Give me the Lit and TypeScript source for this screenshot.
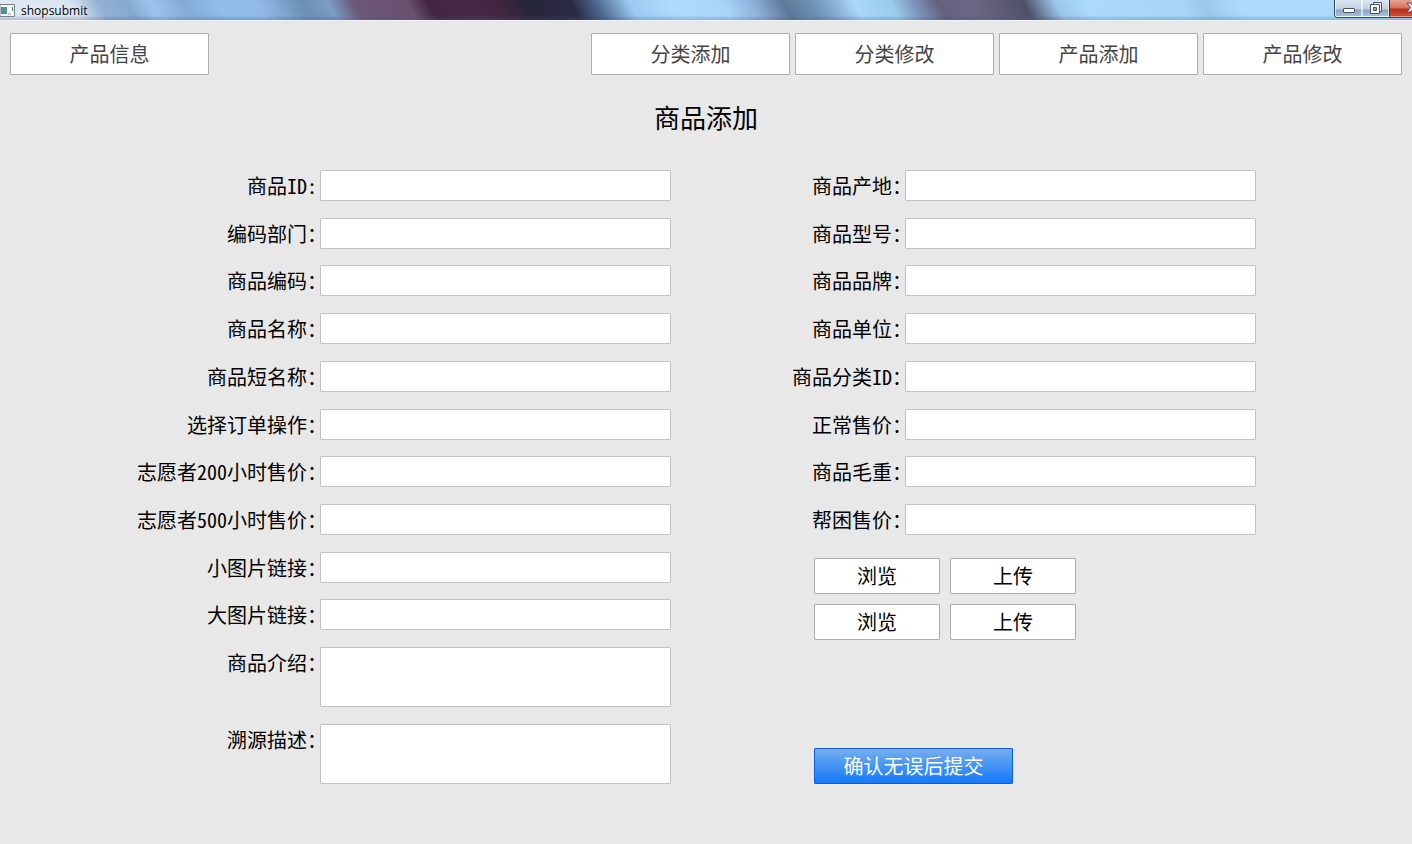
import { LitElement, html, css } from "lit";
import { customElement } from "lit/decorators.js";

interface Field {
  id: string;
  label: string;
  multiline?: boolean;
}

const LEFT_FIELDS: Field[] = [
  { id: "goods-id", label: "商品ID:" },
  { id: "dept-code", label: "编码部门：" },
  { id: "goods-code", label: "商品编码：" },
  { id: "goods-name", label: "商品名称：" },
  { id: "short-name", label: "商品短名称：" },
  { id: "order-action", label: "选择订单操作：" },
  { id: "price-200", label: "志愿者200小时售价：" },
  { id: "price-500", label: "志愿者500小时售价：" },
  { id: "small-image", label: "小图片链接：" },
  { id: "large-image", label: "大图片链接：" },
  { id: "intro", label: "商品介绍：", multiline: true },
  { id: "trace", label: "溯源描述：", multiline: true },
];

const RIGHT_FIELDS: Field[] = [
  { id: "origin", label: "商品产地：" },
  { id: "model", label: "商品型号：" },
  { id: "brand", label: "商品品牌：" },
  { id: "unit", label: "商品单位：" },
  { id: "category-id", label: "商品分类ID：" },
  { id: "price", label: "正常售价：" },
  { id: "weight", label: "商品毛重：" },
  { id: "aid-price", label: "帮困售价：" },
];

@customElement("window-bar")
class WindowBar extends LitElement {
  static styles = css`
    :host {
      display: flex;
      height: 20px;
      overflow: hidden;
      border-bottom: 1px solid #f3f1f4;
      background:
        linear-gradient(to bottom, rgba(255, 255, 255, 0) 15px, rgba(70, 90, 120, 0.3) 20px),
        linear-gradient(
          62deg,
          #dfe9f5 0,
          #d8e4f2 70px,
          #93b1d3 95px,
          #86a9cf 120px,
          #9cc4ee 140px,
          #84abd6 170px,
          #8fbdea 200px,
          #93bae8 235px,
          #6b8fb5 275px,
          #7a9cc5 298px,
          #6c5877 320px,
          #6b5070 368px,
          #42263f 386px,
          #45284a 420px,
          #42263f 445px,
          #27243a 472px,
          #2b2b45 512px,
          #4e6a91 535px,
          #9ccbf3 564px,
          #aedafc 600px,
          #aad6fa 645px,
          #8fb2dc 672px,
          #5f7897 700px,
          #6d8fb3 722px,
          #83a9d0 740px,
          #aad9fb 762px,
          #9acbea 795px,
          #7f9bc0 812px,
          #64607f 836px,
          #6b6783 865px,
          #50506a 912px,
          #9bc6ea 940px,
          #abdafc 965px,
          #a8d6f8 1050px,
          #99c8ea 1070px,
          #abdafc 1100px,
          #abdafc 100%
        );
      font: 12px/22px "Open Sans", "Noto Sans", sans-serif;
      color: #000;
    }
    .app-icon {
      flex: none;
      width: 15px;
      height: 16px;
      margin-top: 4px;
    }
    .name {
      flex: 1;
      padding-left: 6px;
      text-shadow: 0 0 6px #fff;
    }
    .controls {
      display: flex;
      flex: none;
      width: 78px;
      height: 18px;
      overflow: hidden;
      box-sizing: border-box;
      border: 1px solid #38475a;
      border-width: 0 0 1px 1px;
      border-bottom-left-radius: 4px;
    }
    button {
      flex: none;
      display: flex;
      align-items: center;
      justify-content: center;
      box-sizing: border-box;
      width: 27px;
      padding: 0;
      border: 1px solid rgba(255, 255, 255, 0.6);
      border-top: 0;
      background: linear-gradient(#dbe7f3 0, #c0d0e0 9px, #8ba6c0 10px, #a9c6de 17px);
    }
    .close {
      width: 46px;
      border-color: #e59a8c;
      border-left: 1px solid #59201c;
      background: linear-gradient(#e5a797 0, #d4715e 8px, #b62f1c 9px, #cf5138 17px);
    }
    svg {
      display: block;
    }
  `;

  render() {
    return html`
      <svg class="app-icon" viewBox="0 0 15 16">
        <path d="M0 .5H14.5V12.5H0Z" fill="#f7f8fa" stroke="#7d8088" />
        <rect x="1" y="3" width="6" height="7" fill="#4e8f86" />
        <rect x="2" y="3" width="4" height="4" fill="#5f8fb0" />
        <rect x="8" y="9" width="3" height="2" fill="#c9ccd2" />
        <rect x="12" y="3" width="1" height="4" fill="#3d8576" />
      </svg>
      <span class="name">shopsubmit</span>
      <div class="controls">
        <button type="button" aria-label="最小化">
          <svg width="12" height="13" viewBox="0 0 12 13">
            <rect x=".5" y="6.5" width="11" height="4" rx=".5" fill="#fff" stroke="#4b5566" />
          </svg>
        </button>
        <button type="button" aria-label="还原">
          <svg width="12" height="13" viewBox="0 0 12 13">
            <path d="M3.5 .5H11.5V9.5H3.5Z" fill="#fff" stroke="#4b5566" />
            <path d="M.5 2.5H9.5V11.5H.5Z" fill="#fff" stroke="#4b5566" />
            <path d="M3.5 5.5H6.5V8.5H3.5Z" fill="#8ba6c0" stroke="#4b5566" />
          </svg>
        </button>
        <button type="button" class="close" aria-label="关闭">
          <svg width="13" height="12" viewBox="0 0 13 12">
            <path
              d="M1 1H4.500L6.500 3.500L8.500 1H12L8.500 5.500L12 10H8.500L6.500 7.500L4.500 10H1L4.500 5.500Z"
              fill="#fff"
              stroke="#4b4a5a"
            />
          </svg>
        </button>
      </div>
    `;
  }
}

@customElement("app-root")
class AppRoot extends LitElement {
  static styles = css`
    :host {
      display: flex;
      flex-direction: column;
      box-sizing: border-box;
      min-height: 100vh;
      background: #e8e8e8;
      color: #000;
      font: 20px/31px "Noto Sans CJK SC", sans-serif;
    }
    button,
    input,
    textarea {
      box-sizing: border-box;
      margin: 0;
      border-radius: 1px;
      background: #fff;
      font: inherit;
    }
    button {
      height: 36px;
      padding: 0;
      border: 1px solid #adadad;
      color: #000;
      line-height: 32px;
    }
    nav {
      display: flex;
      gap: 5px;
      padding: 12px 10px 0;
    }
    .tab {
      width: 199px;
      height: 42px;
      color: #444;
    }
    .tab:first-child {
      margin-right: auto;
    }
    h1 {
      margin: 22px 0 33px;
      font-size: 26px;
      font-weight: 400;
      line-height: 40px;
      text-align: center;
    }
    form {
      flex: 1;
      display: grid;
      grid-template-columns:
        minmax(0, 317fr) minmax(0, 351fr) minmax(0, 137fr)
        minmax(0, 88fr) minmax(0, 351fr) minmax(0, 153fr);
      grid-template-rows: repeat(10, 31px) repeat(2, 60px);
      align-content: space-between;
      column-gap: 3px;
      padding-bottom: 60px;
    }
    .left,
    .right {
      display: grid;
      grid-row: 1 / -1;
      grid-template-columns: subgrid;
      grid-template-rows: subgrid;
    }
    .left {
      grid-column: 1 / 3;
    }
    .right {
      grid-column: 3 / 6;
    }
    label {
      text-align: right;
      white-space: nowrap;
      font-feature-settings: "hwid", "halt";
    }
    .right label {
      grid-column: 1 / 3;
    }
    input,
    textarea {
      width: 100%;
      height: 100%;
      padding: 0 6px;
      border: 1px solid #c2c2c2;
      resize: none;
    }
    .files {
      grid-column: 2 / 4;
      grid-row: 9 / 12;
      display: grid;
      grid-template-columns: 126px 126px;
      gap: 10px;
      align-content: start;
      padding-top: 6px;
    }
    .submit {
      grid-column: 2 / 4;
      grid-row: 12;
      align-self: end;
      width: 199px;
      border-color: #0a5fd8;
      background: linear-gradient(#76aeed, #1379fb);
      color: #fff;
    }
  `;

  private field(f: Field) {
    return html`
      <label for=${f.id}>${f.label}</label>
      ${f.multiline
        ? html`<textarea id=${f.id}></textarea>`
        : html`<input id=${f.id} type="text" />`}
    `;
  }

  render() {
    return html`
      <window-bar></window-bar>
      <nav>
        ${["产品信息", "分类添加", "分类修改", "产品添加", "产品修改"].map(
          (t) => html`<button type="button" class="tab">${t}</button>`
        )}
      </nav>
      <h1>商品添加</h1>
      <form>
        <div class="left">${LEFT_FIELDS.map((f) => this.field(f))}</div>
        <div class="right">
          ${RIGHT_FIELDS.map((f) => this.field(f))}
          <div class="files">
            <button type="button">浏览</button>
            <button type="button">上传</button>
            <button type="button">浏览</button>
            <button type="button">上传</button>
          </div>
          <button type="button" class="submit">确认无误后提交</button>
        </div>
      </form>
    `;
  }
}
